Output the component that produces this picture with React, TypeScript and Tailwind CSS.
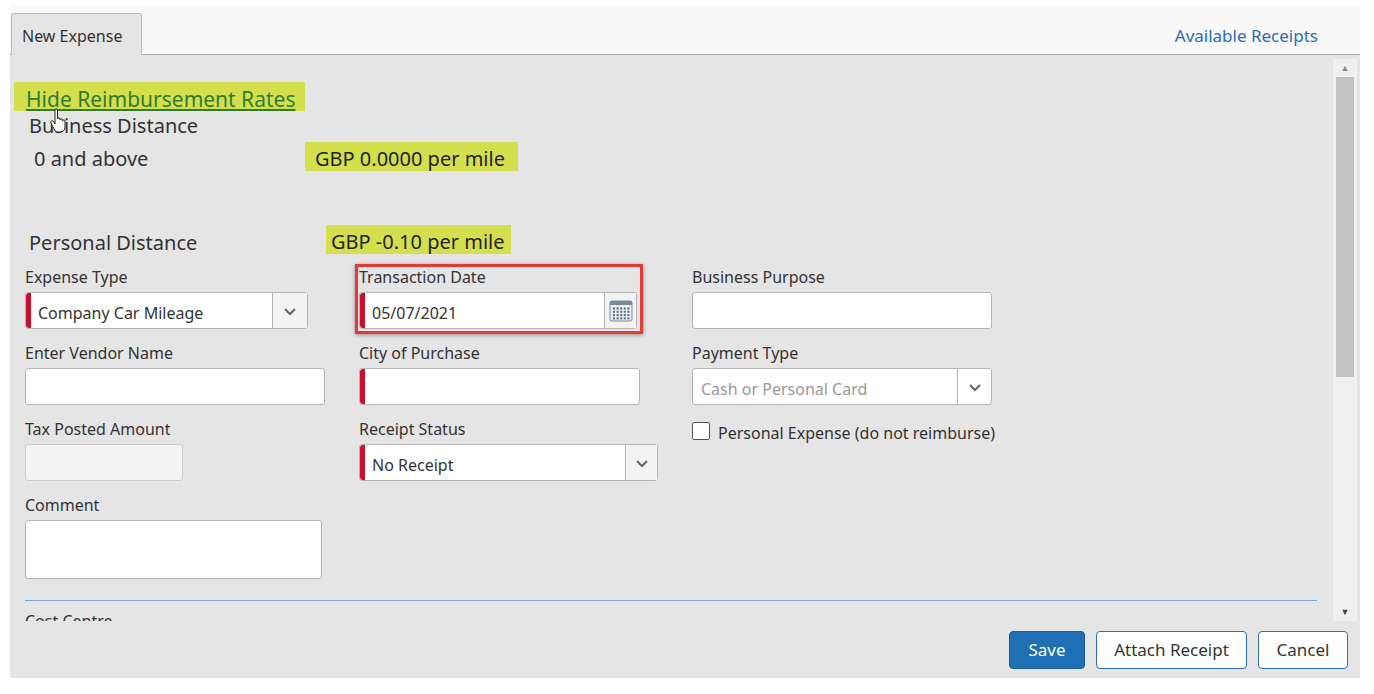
import React from "react";

const Req = () => <span className="absolute left-0 top-0 bottom-0 w-[5px] bg-[#c8102e] rounded-l-[3px]" />;

const Chev = () => (
  <svg width="14" height="14" viewBox="0 0 14 14"><path d="M2 5l5 5 5-5" fill="none" stroke="#666" strokeWidth="2" /></svg>
);

export default function App() {
  const label = "text-[16px] text-[#333] leading-[18px] h-[18px]";
  const input = "relative h-[37px] bg-white border border-[#b5b5b5] rounded-[3px]";
  return (
    <div className="w-[1374px] h-[694px] bg-white pt-[5px] pl-[10px] text-[#333] font-['Liberation_Sans',Arial,sans-serif]">
      <div className="w-[1350px] h-[673px] bg-[#e4e5e4] flex flex-col">
        <div className="h-[50px] bg-[#f9f9f9] border-b border-[#aaa] flex items-end justify-between">
          <div className="ml-[1px] w-[131px] h-[42px] bg-[#e4e5e4] border border-[#bbb] border-b-0 rounded-t-[3px] text-[16px] pl-[10px] pt-[10px] mb-[-1px]">New Expense</div>
          <div className="text-[#2a6db3] text-[17px] mr-[42px] mb-[6px]">Available Receipts</div>
        </div>
        <div className="flex h-[562px] mt-[4px]">
          <div className="flex-1 overflow-hidden relative">
            <div className="h-[29px] w-[291px] ml-[4px] mt-[23px] bg-[#d4df4e] text-[21px] pl-[12px] pt-[2px] text-[#2e7d32] underline">Hide Reimbursement Rates</div>
            <div className="relative">
              <div className="text-[20px] ml-[19px] mt-[3px] leading-[24px]">Business Distance</div>
              <svg className="absolute left-[40px] top-[-6px]" width="20" height="26" viewBox="0 0 20 26"><path d="M5 2c0-1.5 2.5-1.5 2.5 0v9c0-1.5 2.5-1.5 2.5 0v1c0-1.5 2.5-1.5 2.5 0v1c0-1.5 2.5-1.5 2.5 0v6c0 3-2 5-5 5H8c-2 0-3-1-4-3L1 15c-1-2 1-3 2.5-1.5L5 16z" fill="#fff" stroke="#222" strokeWidth="1" /></svg>
            </div>
            <div className="flex items-center mt-[4px] h-[29px]">
              <div className="text-[20px] ml-[24px] w-[271px] pt-[4px]">0 and above</div>
              <div className="h-[29px] w-[213px] bg-[#d4df4e] text-[20px] pl-[10px] pt-[2px] text-[#222]">GBP 0.0000 per mile</div>
            </div>
            <div className="flex items-center mt-[54px] h-[29px]">
              <div className="text-[20px] ml-[19px] w-[297px] pt-[6px]">Personal Distance</div>
              <div className="h-[29px] w-[185px] bg-[#d4df4e] text-[20px] pl-[5px] pt-[2px] text-[#222]">GBP -0.10 per mile</div>
            </div>
            <div className="grid grid-cols-[334px_333px_400px] ml-[15px] mt-[14px] gap-y-[15px]">
              <div>
                <div className={label}>Expense Type</div>
                <div className={`${input} mt-[6px] w-[283px] flex`}>
                  <Req />
                  <div className="flex-1 pl-[12px] pt-[8px] text-[16px]">Company Car Mileage</div>
                  <div className="w-[35px] border-l border-[#b5b5b5] bg-[#f3f3f3] flex items-center justify-center"><Chev /></div>
                </div>
              </div>
              <div className="relative">
                <div className="absolute left-[-4px] top-[-4px] w-[288px] h-[70px] border-[3px] border-[#e53935] shadow-[0_1px_4px_rgba(0,0,0,0.4)]" />
                <div className={label}>Transaction Date</div>
                <div className={`${input} mt-[6px] w-[278px] flex`}>
                  <Req />
                  <div className="flex-1 pl-[12px] pt-[8px] text-[16px]">05/07/2021</div>
                  <div className="w-[32px] border-l border-[#b5b5b5] bg-[#f3f3f3] flex items-center justify-center">
                    <svg width="24" height="22" viewBox="0 0 24 22"><rect x="1" y="1" width="22" height="20" rx="2" fill="#e8ecf0" stroke="#7a8a99" /><rect x="1" y="1" width="22" height="4" fill="#7a8a99" />{[0,1,2,3].map(r=>[0,1,2,3,4].map(c=><rect key={r+"-"+c} x={4+c*3.6} y={7.5+r*3.3} width="2" height="2" fill="#5a6a7a" />))}</svg>
                  </div>
                </div>
              </div>
              <div>
                <div className={label}>Business Purpose</div>
                <div className={`${input} mt-[6px] w-[300px]`} />
              </div>
              <div>
                <div className={label}>Enter Vendor Name</div>
                <div className={`${input} mt-[6px] w-[300px]`} />
              </div>
              <div>
                <div className={label}>City of Purchase</div>
                <div className={`${input} mt-[6px] w-[281px]`}><Req /></div>
              </div>
              <div>
                <div className={label}>Payment Type</div>
                <div className={`${input} mt-[6px] w-[300px] flex bg-[#f0f0f0]`}>
                  <div className="flex-1 pl-[8px] pt-[8px] text-[16px] text-[#999]">Cash or Personal Card</div>
                  <div className="w-[34px] border-l border-[#b5b5b5] flex items-center justify-center"><Chev /></div>
                </div>
              </div>
              <div>
                <div className={label}>Tax Posted Amount</div>
                <div className="mt-[6px] w-[158px] h-[37px] bg-[#f3f3f3] border border-[#ccc] rounded-[3px]" />
              </div>
              <div>
                <div className={label}>Receipt Status</div>
                <div className={`${input} mt-[6px] w-[299px] flex`}>
                  <Req />
                  <div className="flex-1 pl-[12px] pt-[8px] text-[16px]">No Receipt</div>
                  <div className="w-[32px] border-l border-[#b5b5b5] bg-[#f3f3f3] flex items-center justify-center"><Chev /></div>
                </div>
              </div>
              <div className="flex items-start gap-[8px] mt-[1px]">
                <div className="w-[18px] h-[18px] bg-white border border-[#555] rounded-[2px] mt-[1px]" />
                <div className="text-[16px]">Personal Expense (do not reimburse)</div>
              </div>
              <div className="col-span-3">
                <div className={label}>Comment</div>
                <div className={`${input} mt-[6px] w-[297px] h-[59px]`} />
              </div>
            </div>
            <div className="ml-[15px] mr-[16px] mt-[21px] border-t border-[#7fa3cf]" />
            <div className="ml-[15px] mt-[11px] text-[16px] leading-[18px]">Cost Centre</div>
          </div>
          <div className="w-[24px] mr-[3px] bg-[#f0f0f0] flex flex-col items-center">
            <div className="h-[18px] text-[9px] text-[#888] flex items-center">▲</div>
            <div className="w-[18px] h-[300px] bg-[#c2c2c2]" />
            <div className="flex-1" />
            <div className="h-[18px] text-[9px] text-[#444] flex items-center">▼</div>
          </div>
        </div>
        <div className="flex justify-end gap-[11px] pr-[12px] mt-[10px]">
          <button className="h-[38px] w-[76px] rounded-[4px] bg-[#1e6fb3] text-white text-[17px] border border-[#1a5f9a]">Save</button>
          <button className="h-[38px] w-[151px] rounded-[4px] bg-white text-[#333] text-[17px] border border-[#2a6db3]">Attach Receipt</button>
          <button className="h-[38px] w-[90px] rounded-[4px] bg-white text-[#333] text-[17px] border border-[#2a6db3]">Cancel</button>
        </div>
      </div>
    </div>
  );
}
